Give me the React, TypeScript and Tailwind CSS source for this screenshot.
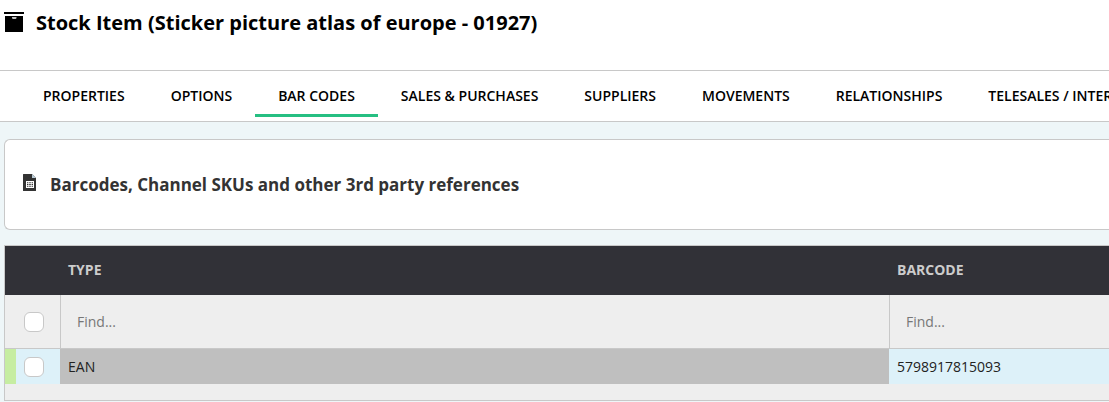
import { useState } from "react";

const tabs = [
  "Properties",
  "Options",
  "Bar Codes",
  "Sales & Purchases",
  "Suppliers",
  "Movements",
  "Relationships",
  "Telesales / Internet",
];

const rows = [{ type: "EAN", barcode: "5798917815093" }];

function BoxIcon() {
  return (
    <svg width="20" height="20" viewBox="0 0 20 20" fill="currentColor" aria-hidden="true">
      <path d="M0 0h20v2H0z" />
      <path fillRule="evenodd" d="M1 4h18v16H1zM8 5.2v.6q0 1 1 1h2.5q1 0 1-1v-.6z" />
    </svg>
  );
}

function SheetIcon() {
  return (
    <svg width="13" height="17" viewBox="0 0 13 17" fill="currentColor" aria-hidden="true">
      <path
        fillRule="evenodd"
        d="M.5 0H9l4 4v12.5q0 .5-.5.5H.5q-.5 0-.5-.5V.5Q0 0 .5 0zM3 7v7h8V7zM4 8.2v1h1.4v-1zM6.2 8.2v1h1.6v-1zM8.6 8.2v1H10v-1zM4 10v1h1.4v-1zM6.2 10v1h1.6v-1zM8.6 10v1H10v-1zM4 11.8v1h1.4v-1zM6.2 11.8v1h1.6v-1zM8.6 11.8v1H10v-1z"
      />
      <path d="M9 0v4h4z" fill="#b9cbd6" />
    </svg>
  );
}

function Check({ label }: { label: string }) {
  return (
    <input
      type="checkbox"
      aria-label={label}
      className="block size-5 appearance-none rounded-md border border-[#c8c8c8] bg-white checked:bg-[#26bf82]"
    />
  );
}

export default function App() {
  const [active, setActive] = useState("Bar Codes");

  return (
    <div className="min-h-screen overflow-hidden bg-[#eef6f8] font-['Open_Sans',sans-serif] text-black">
      <header className="flex h-[70px] items-start gap-3 bg-white px-1 pt-2">
        <span className="pt-1">
          <BoxIcon />
        </span>
        <h1 className="text-xl leading-[30px] font-bold whitespace-nowrap">
          Stock Item (Sticker picture atlas of europe - 01927)
        </h1>
      </header>

      <nav className="flex overflow-hidden border-y border-[#c8c8c8] bg-white pb-1 pl-5">
        {tabs.map((tab) => (
          <button
            key={tab}
            onClick={() => setActive(tab)}
            className={`h-[46px] shrink-0 border-b-3 px-[23px] pt-1.5 text-sm font-semibold whitespace-nowrap uppercase ${
              tab === active ? "border-[#26bf82]" : "border-transparent"
            }`}
          >
            {tab}
          </button>
        ))}
      </nav>

      <main className="pt-[17px] pl-1">
        <section className="flex h-[91px] items-center gap-3.5 rounded-l-md border border-r-0 border-[#c8c8c8] bg-white px-[18px] text-[#333]">
          <span className="pb-1">
            <SheetIcon />
          </span>
          <h2 className="text-[17px] font-bold">Barcodes, Channel SKUs and other 3rd party references</h2>
        </section>

        <div className="mt-[15px] border border-r-0 border-[#c8c8c8] bg-[#eee] pb-4">
          <table className="w-full table-fixed border-separate border-spacing-0 text-left text-sm">
            <colgroup>
              <col className="w-[55px]" />
              <col />
              <col className="w-[220px]" />
            </colgroup>
            <thead>
              <tr className="h-[49px] bg-[#313137] text-[#ccc]">
                <td />
                <th className="px-2 pb-0.5 font-bold">TYPE</th>
                <th className="px-2 pb-0.5 font-bold">BARCODE</th>
              </tr>
              <tr className="h-[54px]">
                <td className="border-b border-[#c8c8c8] pl-[19px]">
                  <Check label="Select all rows" />
                </td>
                <td className="border-b border-l border-[#c8c8c8] px-4">
                  <input
                    aria-label="Find type"
                    placeholder="Find..."
                    className="block w-full bg-transparent placeholder:text-[#777]"
                  />
                </td>
                <td className="border-b border-l border-[#c8c8c8] px-4">
                  <input
                    aria-label="Find barcode"
                    placeholder="Find..."
                    className="block w-full bg-transparent placeholder:text-[#777]"
                  />
                </td>
              </tr>
            </thead>
            <tbody>
              {rows.map((row) => (
                <tr key={row.barcode} className="h-[35px] text-[#222]">
                  <td className="border-l-[11px] border-[#c6eda2] bg-[#ddf1f9] pl-2">
                    <Check label={`Select ${row.barcode}`} />
                  </td>
                  <td className="bg-[#bfbfbf] px-2">{row.type}</td>
                  <td className="bg-[#ddf1f9] px-2">{row.barcode}</td>
                </tr>
              ))}
            </tbody>
          </table>
        </div>
      </main>
    </div>
  );
}
